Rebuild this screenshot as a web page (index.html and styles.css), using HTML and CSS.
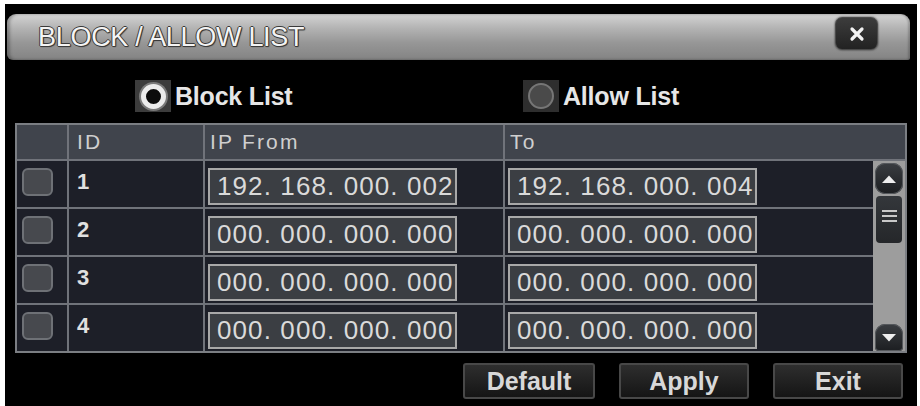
FILE: index.html
```html
<!DOCTYPE html>
<html>
<head>
<meta charset="utf-8">
<link rel="stylesheet" href="styles.css">
</head>
<body>
<div class="panel">
  <div class="titlebar">
    <span class="title">BLOCK / ALLOW LIST</span>
    <button class="close" aria-label="Close">
      <svg width="16" height="16" viewBox="0 0 16 16"><path d="M3 3 L13 13 M13 3 L3 13" stroke="#f2f2f2" stroke-width="3.2" stroke-linecap="round"/></svg>
    </button>
  </div>

  <div class="radios">
    <label class="radio">
      <span class="radio-box on"><span class="dot"></span></span>
      <span class="radio-label">Block List</span>
    </label>
    <label class="radio">
      <span class="radio-box"><span class="dot"></span></span>
      <span class="radio-label">Allow List</span>
    </label>
  </div>

  <div class="table">
    <div class="thead">
      <div class="th"></div>
      <div class="th th-id">ID</div>
      <div class="th">IP From</div>
      <div class="th">To</div>
    </div>
    <div class="tbody">
      <div class="rows">
        <div class="cell c-chk"><span class="chk"></span></div>
        <div class="cell c-id">1</div>
        <div class="cell c-ip"><span class="ip">192. 168. 000. 002</span></div>
        <div class="cell c-ip"><span class="ip">192. 168. 000. 004</span></div>

        <div class="cell c-chk"><span class="chk"></span></div>
        <div class="cell c-id">2</div>
        <div class="cell c-ip"><span class="ip">000. 000. 000. 000</span></div>
        <div class="cell c-ip"><span class="ip">000. 000. 000. 000</span></div>

        <div class="cell c-chk"><span class="chk"></span></div>
        <div class="cell c-id">3</div>
        <div class="cell c-ip"><span class="ip">000. 000. 000. 000</span></div>
        <div class="cell c-ip"><span class="ip">000. 000. 000. 000</span></div>

        <div class="cell c-chk"><span class="chk"></span></div>
        <div class="cell c-id">4</div>
        <div class="cell c-ip"><span class="ip">000. 000. 000. 000</span></div>
        <div class="cell c-ip"><span class="ip">000. 000. 000. 000</span></div>
      </div>
      <div class="scrollbar">
        <span class="sb-btn">
          <svg width="16" height="10" viewBox="0 0 16 10"><path d="M1 9 L8 1.5 L15 9 Z" fill="#eeeeee"/></svg>
        </span>
        <span class="sb-thumb"><i></i><i></i><i></i></span>
        <span class="sb-space"></span>
        <span class="sb-btn down">
          <svg width="16" height="10" viewBox="0 0 16 10"><path d="M1 1 L8 8.5 L15 1 Z" fill="#eeeeee"/></svg>
        </span>
      </div>
    </div>
  </div>

  <div class="actions">
    <button class="btn b-default">Default</button>
    <button class="btn b-apply">Apply</button>
    <button class="btn b-exit">Exit</button>
  </div>
</div>
</body>
</html>
```

FILE: styles.css
```css
html, body {
  margin: 0;
  padding: 0;
  background: #ffffff;
}

body {
  font-family: "Liberation Sans", Arial, sans-serif;
  overflow: hidden;
}

.panel {
  margin: 4px 0 0 5px;
  width: 912px;
  height: 410px;
  box-sizing: border-box;
  background: #000000;
  padding: 10px 7px 0 2px;
  display: flex;
  flex-direction: column;
}

/* ---- title bar ---- */
.titlebar {
  height: 46px;
  border-radius: 9px 9px 2px 6px;
  background: linear-gradient(#d4d4d4 0%, #b4b4b4 30%, #979797 62%, #838383 100%);
  box-shadow: inset 3px 0 3px rgba(0,0,0,0.25), inset -2px 0 2px rgba(0,0,0,0.2);
  display: flex;
  justify-content: space-between;
  align-items: flex-start;
  padding: 0 32px 0 31px;
}

.title {
  margin-top: 8px;
  font-size: 27px;
  line-height: 30px;
  color: #f4f4f4;
  letter-spacing: -0.3px;
  text-shadow: 1px 0 0 #3a3a3a, -1px 0 0 #3a3a3a, 0 1px 0 #3a3a3a, 0 -1px 0 #3a3a3a,
               1px 1px 1px #333;
}

.close {
  margin-top: 3px;
  width: 43px;
  height: 33px;
  border-radius: 7px;
  border: 1px solid #4a4a4a;
  background: linear-gradient(#3c3c3c, #222222);
  box-shadow: 0 0 2px rgba(0,0,0,0.8);
  display: flex;
  align-items: center;
  justify-content: center;
  padding: 0;
}

/* ---- radios ---- */
.radios {
  height: 63px;
  display: grid;
  grid-template-columns: 388px auto;
  align-items: center;
  padding-left: 128px;
  padding-top: 9px;
  box-sizing: border-box;
}

.radio {
  display: flex;
  align-items: center;
  gap: 4px;
}

.radio-box {
  width: 36px;
  height: 32px;
  background: #2e2e2e;
  display: flex;
  align-items: center;
  justify-content: center;
}

.radio-box .dot {
  width: 26px;
  height: 26px;
  border-radius: 50%;
  box-sizing: border-box;
  background: #4a4a4a;
  border: 2px solid #767676;
}

.radio-box.on {
  background: #3c3c3c;
}

.radio-box.on .dot {
  background: #0c0c0c;
  border: 5px solid #ececec;
  box-shadow: 0 0 0 2px #7a7a7a;
  width: 25px;
  height: 25px;
}

.radio-label {
  font-size: 25px;
  font-weight: bold;
  color: #e6e6e6;
  letter-spacing: -0.2px;
}

/* ---- table ---- */
.table {
  margin-left: 8px;
  width: 892px;
  border: 2px solid #7b7e83;
  box-sizing: border-box;
  background: #70737a;
  display: flex;
  flex-direction: column;
  gap: 2px;
}

.thead {
  display: grid;
  grid-template-columns: 50px 134px 298px 1fr;
  column-gap: 2px;
  height: 34px;
}

.th {
  background: #40444c;
  color: #cfcfcf;
  font-size: 21px;
  letter-spacing: 2.2px;
  line-height: 34px;
  padding-left: 5px;
}

.th-id {
  padding-left: 8px;
}

.tbody {
  display: flex;
}

.rows {
  width: 856px;
  display: grid;
  grid-template-columns: 50px 134px 298px 368px;
  grid-auto-rows: 46px;
  gap: 2px;
}

.cell {
  background: #1d1f28;
  box-sizing: border-box;
}

.c-chk {
  padding: 7px 0 0 5px;
}

.chk {
  display: block;
  width: 31px;
  height: 28px;
  box-sizing: border-box;
  border-radius: 6px;
  border: 2px solid #6e7176;
  background: #47494e;
}

.c-id {
  display: flex;
  align-items: center;
  padding-left: 8px;
  padding-bottom: 4px;
  font-size: 22px;
  font-weight: bold;
  color: #e0e0e0;
}

.c-ip {
  padding: 7px 0 0 3px;
}

.ip {
  display: block;
  width: 249px;
  height: 37px;
  box-sizing: border-box;
  border: 2px solid #a8a8a8;
  background: #3b3e43;
  color: #dadada;
  font-size: 26px;
  line-height: 33px;
  letter-spacing: 1.1px;
  padding-left: 7px;
  white-space: nowrap;
}

.scrollbar {
  width: 32px;
  background: #9d9d9d;
  display: flex;
  flex-direction: column;
  align-items: center;
  padding: 2px 0 0 0;
  box-sizing: border-box;
}

.sb-btn {
  width: 28px;
  height: 31px;
  border-radius: 10px;
  background: linear-gradient(#3a3d41, #1c1e21);
  box-shadow: inset 0 0 0 1px #55585c;
  display: flex;
  align-items: center;
  justify-content: center;
}

.sb-btn.down {
  height: 27px;
  border-radius: 10px 10px 4px 4px;
}

.sb-thumb {
  margin-top: 2px;
  width: 26px;
  height: 47px;
  border-radius: 4px;
  background: linear-gradient(#34373b, #25272a);
  display: flex;
  flex-direction: column;
  align-items: center;
  justify-content: center;
  gap: 3px;
  padding-bottom: 8px;
  box-sizing: border-box;
}

.sb-thumb i {
  display: block;
  width: 15px;
  height: 2px;
  background: #c8c8c8;
}

.sb-space {
  flex: 1;
}

/* ---- bottom buttons ---- */
.actions {
  display: flex;
  justify-content: flex-end;
  gap: 24px;
  margin-top: 10px;
  padding-right: 7px;
}

.btn {
  height: 36px;
  border: 2px solid #484848;
  border-radius: 3px;
  background: linear-gradient(#2e2e2e, #151515);
  color: #d8d8d8;
  font-family: "Liberation Sans", Arial, sans-serif;
  font-size: 25px;
  font-weight: bold;
  padding: 0;
  line-height: 30px;
}

.b-default { width: 132px; }
.b-apply { width: 130px; }
.b-exit { width: 130px; }
```
